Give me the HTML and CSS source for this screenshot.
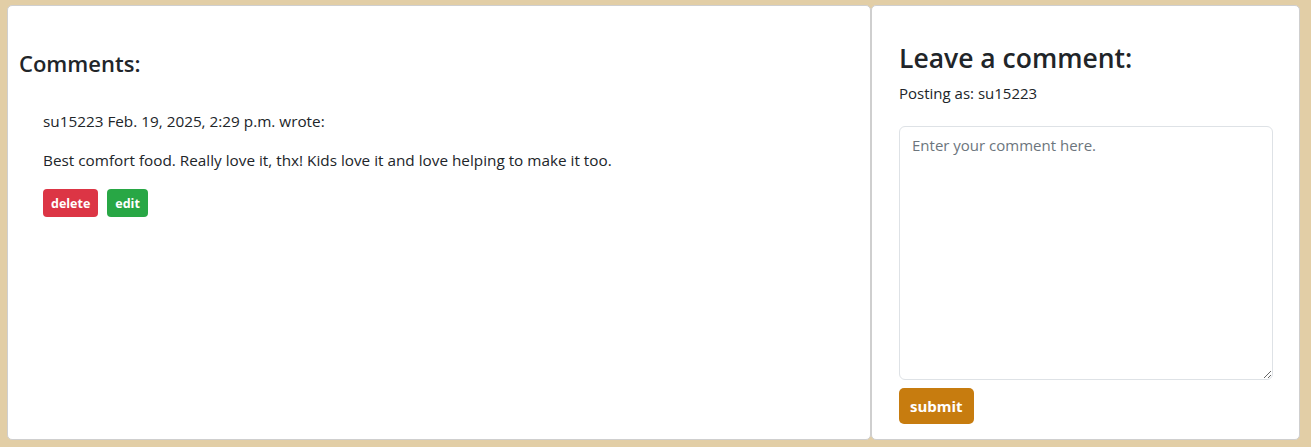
FILE: index.html
```html
<!DOCTYPE html>
<html>
<head>
<meta charset="utf-8">
<link rel="stylesheet" href="styles.css">
</head>
<body>
<div class="page">
  <section class="card comments">
    <h4 class="comments-title">Comments:</h4>
    <div class="comment">
      <p class="meta">su15223 Feb. 19, 2025, 2:29 p.m. wrote:</p>
      <p class="body">Best comfort food. Really love it, thx! Kids love it and love helping to make it too.</p>
      <div class="actions">
        <button class="btn btn-delete">delete</button>
        <button class="btn btn-edit">edit</button>
      </div>
    </div>
  </section>
  <section class="card leave">
    <h3 class="leave-title">Leave a comment:</h3>
    <p class="posting">Posting as: su15223</p>
    <form class="form">
      <textarea class="textarea" placeholder="Enter your comment here."></textarea>
      <button type="button" class="btn btn-submit">submit</button>
    </form>
  </section>
</div>
</body>
</html>
```
FILE: styles.css
```css
html, body {
  margin: 0;
  padding: 0;
}
body {
  background: #e2cea6;
  font-family: "Open Sans", "Noto Sans", sans-serif;
  color: #212529;
}
.page {
  display: flex;
  gap: 0;
  padding: 5px 11px 7px 7px;
  height: 447px;
  box-sizing: border-box;
}
.card {
  background: #fff;
  border: 1px solid #cfcfcf;
  border-radius: 5px;
  box-sizing: border-box;
  flex-shrink: 0;
}
.comments {
  width: 864px;
  padding: 43px 12px 0 11px;
}
.leave {
  width: 429px;
  padding: 36px 27px 0 27px;
}
.comments-title {
  margin: 0 0 33px 0;
  font-size: 22px;
  font-weight: 600;
  line-height: 28px;
}
.comment {
  padding-left: 24px;
}
.meta, .body {
  margin: 0 0 17px 0;
  font-size: 15.3px;
  line-height: 22px;
}
.body { margin-bottom: 18px; }
.actions {
  display: flex;
  gap: 9px;
}
.btn {
  border: none;
  color: #fff;
  font-family: inherit;
  font-weight: 700;
  cursor: pointer;
}
.btn-delete, .btn-edit {
  height: 28px;
  padding: 0 8px;
  font-size: 12.5px;
  border-radius: 4px;
}
.btn-delete { background: #dc3545; }
.btn-edit { background: #28a745; }
.leave-title {
  margin: 0 0 8px 0;
  font-size: 26.5px;
  font-weight: 600;
  line-height: 32px;
}
.posting {
  margin: 0 0 22px 0;
  font-size: 15px;
  line-height: 22px;
}
.form {
  display: flex;
  flex-direction: column;
  align-items: flex-start;
  gap: 8px;
}
.textarea {
  width: 374px;
  height: 254px;
  box-sizing: border-box;
  border: 1px solid #dee2e6;
  border-radius: 6px;
  padding: 7px 12px;
  font-family: inherit;
  font-size: 15px;
  line-height: 22px;
  resize: vertical;
}
.textarea::placeholder { color: #6c757d; }
.btn-submit {
  background: #c77c0f;
  height: 36px;
  padding: 0 11px;
  font-size: 15px;
  border-radius: 5px;
}
```
